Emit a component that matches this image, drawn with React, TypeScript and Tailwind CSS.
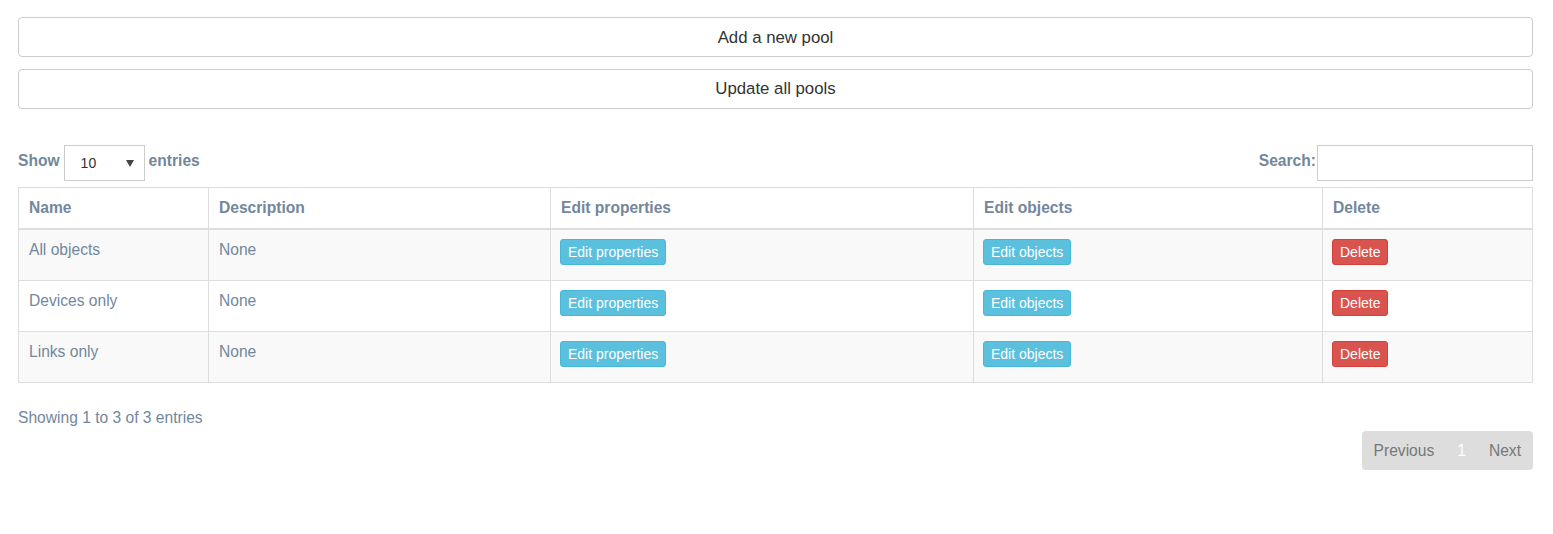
import React from "react";

const rows = [
  { name: "All objects", desc: "None" },
  { name: "Devices only", desc: "None" },
  { name: "Links only", desc: "None" },
];

const headers = ["Name", "Description", "Edit properties", "Edit objects", "Delete"];

export default function App() {
  return (
    <div
      className="min-h-[534px] bg-white pt-[17px] pl-[18px] pr-[20px] text-[#73879C] text-[15.6px]"
      style={{ fontFamily: '"Liberation Sans", Arial, Helvetica, sans-serif' }}
    >
      <div className="flex flex-col gap-[12px]">
        <button className="h-[40px] w-full rounded-[4px] border border-[#ccc] bg-white pt-[1px] text-[16.8px] text-[#333]">
          Add a new pool
        </button>
        <button className="h-[40px] w-full rounded-[4px] border border-[#ccc] bg-white text-[16.8px] text-[#333]">
          Update all pools
        </button>
      </div>

      <div className="mt-[36px] flex h-[36px] items-center justify-between">
        <div className="flex items-center">
          <span className="-mt-1 font-bold leading-[20px]">Show</span>
          <div className="ml-[4px] flex h-[36px] w-[81px] items-center justify-between border border-[#ccc] bg-white pl-[16px] pr-[10px]">
            <span className="text-[14px] text-[#333]">10</span>
            <svg width="8" height="7" viewBox="0 0 8 7" className="mt-[1px]">
              <polygon points="0,0 8,0 4,7" fill="#444" />
            </svg>
          </div>
          <span className="-mt-1 ml-[4px] font-bold leading-[20px]">entries</span>
        </div>
        <div className="flex items-center">
          <span className="-mt-1 font-bold leading-[20px]">Search:</span>
          <input className="ml-[1px] h-[36px] w-[216px] border border-[#ccc] bg-white outline-none" />
        </div>
      </div>

      <div className="mt-[6px] border border-[#ddd]">
        <div className="grid grid-cols-[190px_342px_423px_349px_1fr] border-b-2 border-[#ddd]">
          {headers.map((h, i) => (
            <div
              key={h}
              className={`flex h-[40px] items-center pl-[10px] font-bold ${i < 4 ? "border-r border-[#ddd]" : ""}`}
            >
              {h}
            </div>
          ))}
        </div>
        {rows.map((r, idx) => (
          <div
            key={r.name}
            className={`grid grid-cols-[190px_342px_423px_349px_1fr] ${idx % 2 === 0 ? "bg-[#f9f9f9]" : "bg-white"} ${idx < 2 ? "border-b border-[#ddd]" : ""}`}
          >
            <div className="h-[50px] border-r border-[#ddd] pl-[10px] pt-[10px] leading-[20px]">{r.name}</div>
            <div className="h-[50px] border-r border-[#ddd] pl-[10px] pt-[10px] leading-[20px]">{r.desc}</div>
            <div className="h-[50px] border-r border-[#ddd] pl-[9px] pt-[9px]">
              <button className="h-[26px] rounded-[3px] border border-[#46b8da] bg-[#5bc0de] px-[7px] text-[14px] leading-[20px] text-white">
                Edit properties
              </button>
            </div>
            <div className="h-[50px] border-r border-[#ddd] pl-[9px] pt-[9px]">
              <button className="h-[26px] rounded-[3px] border border-[#46b8da] bg-[#5bc0de] px-[7px] text-[14px] leading-[20px] text-white">
                Edit objects
              </button>
            </div>
            <div className="h-[50px] pl-[9px] pt-[9px]">
              <button className="h-[26px] rounded-[3px] border border-[#d43f3a] bg-[#d9534f] px-[7px] text-[14px] leading-[20px] text-white">
                Delete
              </button>
            </div>
          </div>
        ))}
      </div>

      <div className="mt-[25px] leading-[20px]">Showing 1 to 3 of 3 entries</div>

      <div className="mt-[3px] flex justify-end">
        <div className="flex h-[39px] items-center rounded-[4px] bg-[#ddd] px-[12px] text-[#777]">
          <span>Previous</span>
          <span className="ml-[23px] text-white">1</span>
          <span className="ml-[23px]">Next</span>
        </div>
      </div>
    </div>
  );
}
